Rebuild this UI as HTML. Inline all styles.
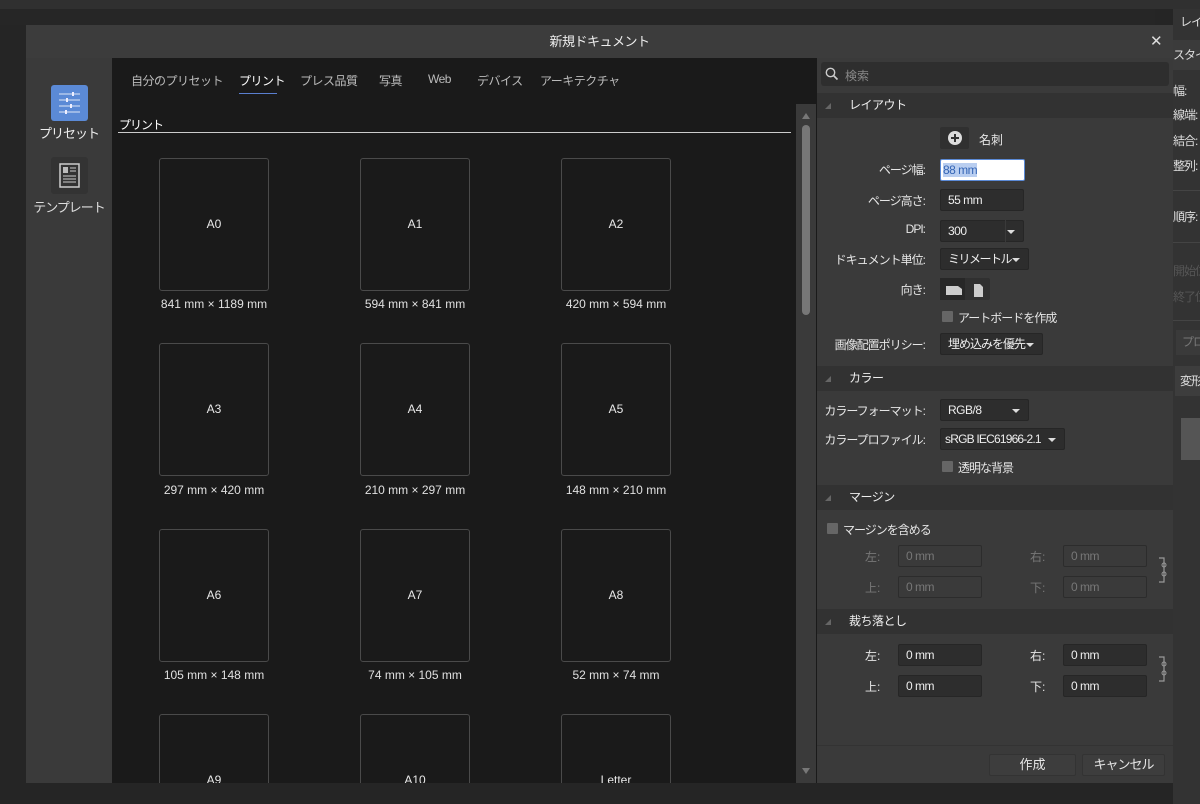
<!DOCTYPE html>
<html><head><meta charset="utf-8"><style>
*{margin:0;padding:0;box-sizing:border-box}
body{width:1200px;height:804px;background:#252525;position:relative;overflow:hidden;font-family:"Liberation Sans","Noto Sans CJK JP",sans-serif;font-size:12px;color:#e6e6e6;white-space:nowrap}
.a{position:absolute}
.card{position:absolute;width:110px;height:133px;border:1px solid #4a4a4a;border-radius:3px;background:#1a1a1a;color:#e8e8e8;font-size:12px;text-align:center;line-height:131px}
.cl{position:absolute;width:200px;text-align:center;font-size:12px;color:#e0e0e0}
.sh{position:absolute;left:817px;width:356px;height:25px;background:#323232;color:#eee;font-size:12px;line-height:25px;padding-left:32px;letter-spacing:-0.5px}
.sh:before{content:"";position:absolute;left:8px;top:10px;border-left:6px solid transparent;border-bottom:6px solid #666}
.lbl{position:absolute;text-align:right;width:110px;font-size:12px;color:#e6e6e6;letter-spacing:-1px}
.in{position:absolute;height:22px;background:#2d2d2d;border:1px solid #262626;border-radius:2px;padding-left:7px;line-height:21px;font-size:12px;color:#eee;overflow:hidden;letter-spacing:-0.5px}
.dis{color:#777;background:#3a3a3a;border-color:#2c2c2c}
.dd:after{content:"";position:absolute;right:8px;top:9px;border-left:4px solid transparent;border-right:4px solid transparent;border-top:4px solid #ddd}
.cb{position:absolute;width:11px;height:11px;background:#666;border-radius:1px}
.tab{position:absolute;top:72px;font-size:12px;color:#bbb;letter-spacing:-0.5px}
.t{letter-spacing:-1px}
</style></head><body>
<div class="a" style="left:0;top:0;width:1200px;height:9px;background:#303030"></div>
<div class="a" style="left:0;top:9px;width:1155px;height:16px;background:#262626"></div>
<!-- right app panel -->
<div class="a" style="left:1173px;top:9px;width:27px;height:795px;background:#333;overflow:hidden">
<div class="a t" style="left:7px;top:4px;color:#ddd">レイ</div>
<div class="a t" style="left:0;top:31px;width:27px;height:30px;background:#3b3b3b;color:#ddd;line-height:30px">スタイ</div>
<div class="a t" style="left:0;top:73px;color:#ddd">幅:</div>
<div class="a t" style="left:0;top:97px;color:#ddd">線端:</div>
<div class="a t" style="left:0;top:123px;color:#ddd">結合:</div>
<div class="a t" style="left:0;top:148px;color:#ddd">整列:</div>
<div class="a" style="left:0;top:181px;width:27px;height:1px;background:#444"></div>
<div class="a t" style="left:0;top:199px;color:#ddd">順序:</div>
<div class="a" style="left:0;top:233px;width:27px;height:1px;background:#444"></div>
<div class="a t" style="left:0;top:253px;color:#555">開始位</div>
<div class="a t" style="left:0;top:279px;color:#555">終了位</div>
<div class="a" style="left:0;top:311px;width:27px;height:1px;background:#444"></div>
<div class="a t" style="left:3px;top:321px;width:24px;height:25px;background:#3a3a3a;color:#777;line-height:25px;padding-left:6px">プロ</div>
<div class="a t" style="left:2px;top:357px;width:25px;height:30px;background:#3d3d3d;color:#ddd;line-height:30px;padding-left:5px">変形</div>
<div class="a" style="left:8px;top:409px;width:19px;height:42px;background:#555"></div>
</div>
<!-- dialog -->
<div class="a" style="left:26px;top:25px;width:1147px;height:758px;background:#3a3a3a"></div>
<div class="a" style="left:26px;top:25px;width:1147px;height:33px;background:#3c3c3c;text-align:center;line-height:33px;font-size:13px;color:#eee;letter-spacing:-0.5px">新規ドキュメント</div>
<div class="a" style="left:1150px;top:32px;font-size:15px;color:#ddd">✕</div>
<!-- sidebar -->
<div class="a" style="left:51px;top:85px;width:37px;height:36px;background:#5b8ad6;border-radius:3px">
<svg width="37" height="36"><g stroke="#dce6f7" stroke-width="1"><line x1="8" y1="9" x2="29" y2="9"/><line x1="8" y1="15" x2="29" y2="15"/><line x1="8" y1="21" x2="29" y2="21"/><line x1="8" y1="27" x2="29" y2="27"/></g><g fill="#eef"><rect x="21" y="7" width="2" height="4"/><rect x="15" y="13" width="2" height="4"/><rect x="19" y="19" width="2" height="4"/><rect x="14" y="25" width="2" height="4"/></g></svg></div>
<div class="a t" style="left:26px;top:123px;width:86px;text-align:center;font-size:13px;color:#eee">プリセット</div>
<div class="a" style="left:51px;top:157px;width:37px;height:37px;background:#333;border-radius:3px">
<svg width="37" height="37"><rect x="9" y="7" width="19" height="23" fill="none" stroke="#ccc" stroke-width="1.5"/><rect x="12" y="10" width="5" height="6" fill="#bbb"/><g stroke="#ccc"><line x1="19" y1="11" x2="25" y2="11"/><line x1="19" y1="14" x2="25" y2="14"/><line x1="12" y1="19" x2="25" y2="19"/><line x1="12" y1="22" x2="25" y2="22"/><line x1="12" y1="25" x2="25" y2="25"/></g></svg></div>
<div class="a t" style="left:26px;top:197px;width:86px;text-align:center;font-size:13px;color:#ddd">テンプレート</div>
<!-- content -->
<div class="a" style="left:112px;top:58px;width:705px;height:725px;background:#1a1a1a"></div>
<div class="tab" style="left:131px">自分のプリセット</div>
<div class="tab" style="left:239px;color:#fff">プリント</div>
<div class="a" style="left:239px;top:93px;width:38px;height:1px;background:#5a7fd0"></div>
<div class="tab" style="left:300px">プレス品質</div>
<div class="tab" style="left:379px">写真</div>
<div class="tab" style="left:428px">Web</div>
<div class="tab" style="left:477px">デバイス</div>
<div class="tab" style="left:540px">アーキテクチャ</div>
<div class="a t" style="left:119px;top:116px;font-size:12px;color:#fff">プリント</div>
<div class="a" style="left:118px;top:132px;width:673px;height:1px;background:#ccc"></div>
<div class="a" style="left:796px;top:104px;width:20px;height:679px;background:#3a3a3a"></div>
<div class="a" style="left:802px;top:125px;width:8px;height:190px;background:#777;border-radius:4px"></div>
<div class="a" style="left:802px;top:113px;border-left:4px solid transparent;border-right:4px solid transparent;border-bottom:6px solid #777"></div>
<div class="a" style="left:802px;top:768px;border-left:4px solid transparent;border-right:4px solid transparent;border-top:6px solid #777"></div>

<div class="card" style="left:159px;top:158px">A0</div><div class="cl" style="left:114px;top:297px">841 mm × 1189 mm</div>
<div class="card" style="left:360px;top:158px">A1</div><div class="cl" style="left:315px;top:297px">594 mm × 841 mm</div>
<div class="card" style="left:561px;top:158px">A2</div><div class="cl" style="left:516px;top:297px">420 mm × 594 mm</div>
<div class="card" style="left:159px;top:343px">A3</div><div class="cl" style="left:114px;top:483px">297 mm × 420 mm</div>
<div class="card" style="left:360px;top:343px">A4</div><div class="cl" style="left:315px;top:483px">210 mm × 297 mm</div>
<div class="card" style="left:561px;top:343px">A5</div><div class="cl" style="left:516px;top:483px">148 mm × 210 mm</div>
<div class="card" style="left:159px;top:529px">A6</div><div class="cl" style="left:114px;top:668px">105 mm × 148 mm</div>
<div class="card" style="left:360px;top:529px">A7</div><div class="cl" style="left:315px;top:668px">74 mm × 105 mm</div>
<div class="card" style="left:561px;top:529px">A8</div><div class="cl" style="left:516px;top:668px">52 mm × 74 mm</div>
<div class="a" style="left:112px;top:714px;width:684px;height:69px;overflow:hidden">
<div class="card" style="left:47px;top:0">A9</div>
<div class="card" style="left:248px;top:0">A10</div>
<div class="card" style="left:449px;top:0">Letter</div>
</div>
<div class="a" style="left:0;top:783px;width:1173px;height:21px;background:#252525"></div>

<!-- right panel -->
<div class="a" style="left:821px;top:62px;width:348px;height:24px;background:#2e2e2e;border-radius:3px"></div>
<svg class="a" style="left:825px;top:67px" width="14" height="14"><circle cx="5.5" cy="5.5" r="4.2" fill="none" stroke="#ccc" stroke-width="1.4"/><line x1="8.5" y1="8.5" x2="12.5" y2="12.5" stroke="#ccc" stroke-width="1.6"/></svg>
<div class="a" style="left:845px;top:67px;color:#888;font-size:12px">検索</div>
<div class="sh" style="top:93px">レイアウト</div>
<div class="a" style="left:940px;top:127px;width:29px;height:22px;background:#303030;border-radius:2px"></div>
<svg class="a" style="left:947px;top:130px" width="16" height="16"><circle cx="8" cy="8" r="7" fill="#ddd"/><path d="M8 4v8M4 8h8" stroke="#333" stroke-width="2"/></svg>
<div class="a" style="left:979px;top:131px">名刺</div>
<div class="lbl" style="left:815px;top:161px">ページ幅:</div>
<div class="in" style="left:940px;top:159px;width:85px;background:#fff;border:1px solid #5b8ad6;padding-left:2px"><span style="background:#b9cef0;color:#3465b5">88 mm</span></div>
<div class="lbl" style="left:815px;top:192px">ページ高さ:</div>
<div class="in" style="left:940px;top:189px;width:84px">55 mm</div>
<div class="lbl" style="left:815px;top:222px">DPI:</div>
<div class="in dd" style="left:940px;top:220px;width:84px">300</div>
<div class="a" style="left:1005px;top:220px;width:1px;height:22px;background:#3a3a3a"></div>
<div class="lbl" style="left:815px;top:251px">ドキュメント単位:</div>
<div class="in dd" style="left:940px;top:248px;width:89px;letter-spacing:-1.5px">ミリメートル</div>
<div class="lbl" style="left:815px;top:281px">向き:</div>
<div class="a" style="left:940px;top:278px;width:50px;height:22px;background:#303030;border-radius:2px"></div>
<div class="a" style="left:940px;top:278px;width:25px;height:22px;background:#272727"></div>
<svg class="a" style="left:944px;top:283px" width="44" height="14"><path d="M2 3h12l4 3v6H2z" fill="#ccc"/><path d="M30 1h6l3 3v10h-9z" fill="#ccc"/></svg>
<div class="cb" style="left:942px;top:311px"></div>
<div class="a t" style="left:958px;top:309px">アートボードを作成</div>
<div class="lbl" style="left:815px;top:336px">画像配置ポリシー:</div>
<div class="in dd" style="left:940px;top:333px;width:103px;letter-spacing:-1px">埋め込みを優先</div>
<div class="sh" style="top:366px">カラー</div>
<div class="lbl" style="left:815px;top:402px">カラーフォーマット:</div>
<div class="in dd" style="left:940px;top:399px;width:89px">RGB/8</div>
<div class="lbl" style="left:815px;top:431px">カラープロファイル:</div>
<div class="in dd" style="left:940px;top:428px;width:125px;padding-left:4px;letter-spacing:-0.8px">sRGB IEC61966-2.1</div>
<div class="cb" style="left:942px;top:461px"></div>
<div class="a t" style="left:958px;top:459px">透明な背景</div>
<div class="sh" style="top:485px">マージン</div>
<div class="cb" style="left:827px;top:523px"></div>
<div class="a t" style="left:843px;top:521px">マージンを含める</div>
<div class="a" style="left:865px;top:548px;color:#777">左:</div>
<div class="in dis" style="left:898px;top:545px;width:84px">0 mm</div>
<div class="a" style="left:1030px;top:548px;color:#777">右:</div>
<div class="in dis" style="left:1063px;top:545px;width:84px">0 mm</div>
<div class="a" style="left:865px;top:579px;color:#777">上:</div>
<div class="in dis" style="left:898px;top:576px;width:84px">0 mm</div>
<div class="a" style="left:1030px;top:579px;color:#777">下:</div>
<div class="in dis" style="left:1063px;top:576px;width:84px">0 mm</div>
<svg class="a" style="left:1158px;top:557px" width="10" height="26"><path d="M1 1h5v24H1" fill="none" stroke="#999" stroke-width="1.2"/><circle cx="6" cy="8" r="2" fill="none" stroke="#999"/><circle cx="6" cy="17" r="2" fill="none" stroke="#999"/></svg>
<div class="sh" style="top:609px">裁ち落とし</div>
<div class="a" style="left:865px;top:647px">左:</div>
<div class="in" style="left:898px;top:644px;width:84px">0 mm</div>
<div class="a" style="left:1030px;top:647px">右:</div>
<div class="in" style="left:1063px;top:644px;width:84px">0 mm</div>
<div class="a" style="left:865px;top:678px">上:</div>
<div class="in" style="left:898px;top:675px;width:84px">0 mm</div>
<div class="a" style="left:1030px;top:678px">下:</div>
<div class="in" style="left:1063px;top:675px;width:84px">0 mm</div>
<svg class="a" style="left:1158px;top:656px" width="10" height="26"><path d="M1 1h5v24H1" fill="none" stroke="#999" stroke-width="1.2"/><circle cx="6" cy="8" r="2" fill="none" stroke="#999"/><circle cx="6" cy="17" r="2" fill="none" stroke="#999"/></svg>
<div class="a" style="left:817px;top:745px;width:356px;height:1px;background:#333"></div>
<div class="a" style="left:989px;top:754px;width:87px;height:22px;background:#3d3d3d;border:1px solid #333;border-radius:2px;text-align:center;line-height:20px;font-size:13px">作成</div>
<div class="a t" style="left:1082px;top:754px;width:83px;height:22px;background:#3d3d3d;border:1px solid #333;border-radius:2px;text-align:center;line-height:20px;font-size:13px">キャンセル</div>
</body></html>
